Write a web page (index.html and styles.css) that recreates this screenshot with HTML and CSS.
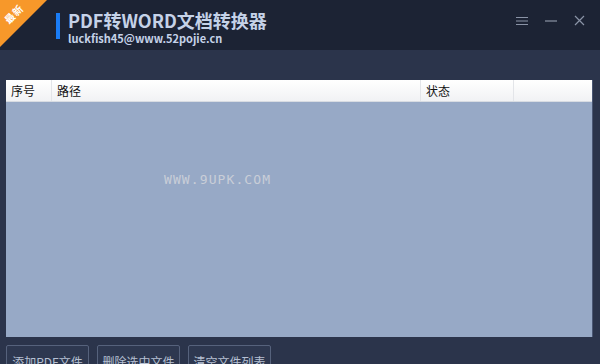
FILE: index.html
```html
<!DOCTYPE html>
<html lang="zh-CN">
  <head>
    <meta charset="UTF-8" />
    <title>PDF转WORD文档转换器</title>
    <link rel="stylesheet" href="styles.css">
  </head>
  <body>
    <div class="window">
      <div class="titlebar">
        <div class="badge"></div>
        <span class="badge-text">最新</span>
        <div class="brand">
          <div class="brand-bar"></div>
          <div class="brand-text">
            <h1>PDF转WORD文档转换器</h1>
            <p>luckfish45@www.52pojie.cn</p>
          </div>
        </div>
        <div class="controls">
          <svg width="12" height="10" viewBox="0 0 12 10"><path d="M0 1.5h12M0 5h12M0 8.5h12" stroke="#8a93a6" stroke-width="1.2"/></svg>
          <svg width="12" height="10" viewBox="0 0 12 10"><path d="M0 5h12" stroke="#8a93a6" stroke-width="1.2"/></svg>
          <svg width="11" height="11" viewBox="0 0 11 11"><path d="M1 1l9 9M10 1l-9 9" stroke="#8a93a6" stroke-width="1.2"/></svg>
        </div>
      </div>

      <div class="content">
        <div class="file-table">
          <div class="thead">
            <div class="col col-num">序号</div>
            <div class="col col-path">路径</div>
            <div class="col col-state">状态</div>
            <div class="col col-rest"></div>
          </div>
          <div class="tbody">
            <span class="watermark">WWW.9UPK.COM</span>
          </div>
        </div>

        <div class="actions">
          <button>添加PDF文件</button>
          <button>删除选中文件</button>
          <button>清空文件列表</button>
        </div>
      </div>
    </div>
  </body>
</html>
```

FILE: styles.css
```css
body {
  margin: 0;
  padding: 0;
  font-family: "Noto Sans CJK SC", "Noto Sans", sans-serif;
  background-color: #2b344b;
  overflow: hidden;
}

.window {
  width: 600px;
  height: 364px;
  display: flex;
  flex-direction: column;
  overflow: hidden;
}

/* Title bar */
.titlebar {
  height: 50px;
  flex-shrink: 0;
  background-color: #1c2334;
  display: flex;
  align-items: flex-start;
  position: relative;
  overflow: hidden;
}

.badge {
  position: absolute;
  left: 0;
  top: 0;
  width: 47px;
  height: 47px;
  background-color: #f7982a;
  clip-path: polygon(0 0, 100% 0, 0 100%);
}

.badge-text {
  position: absolute;
  left: 3px;
  top: 8px;
  color: #fff;
  font-size: 10px;
  font-weight: bold;
  line-height: 12px;
  letter-spacing: 1px;
  transform: rotate(-45deg);
}

.brand {
  display: flex;
  margin-left: 56px;
  margin-top: 13px;
}

.brand-bar {
  width: 4px;
  height: 26px;
  background-color: #1a7cf5;
  margin-right: 8px;
}

.brand-text h1 {
  margin: 0;
  margin-top: -3px;
  font-size: 18px;
  line-height: 21px;
  font-weight: bold;
  color: #c5d2e8;
}

.brand-text p {
  margin: 0;
  font-size: 11px;
  line-height: 14px;
  font-weight: bold;
  color: #c5d2e8;
}

.controls {
  margin-left: auto;
  margin-right: 15px;
  margin-top: 15px;
  display: flex;
  align-items: center;
  gap: 17px;
}

/* Content */
.content {
  flex: 1;
  padding: 30px 7px 0 6px;
  display: flex;
  flex-direction: column;
}

.file-table {
  height: 257px;
  flex-shrink: 0;
  display: flex;
  flex-direction: column;
  border-right: 1px solid #4a5774;
}

.thead {
  height: 21px;
  display: flex;
  background: linear-gradient(#ffffff, #f1f2f4);
  border-bottom: 1px solid #d8dce2;
  font-size: 12px;
  color: #111;
}

.col {
  padding-left: 5px;
  line-height: 21px;
  border-right: 1px solid #e3e5e9;
}

.col-num {
  width: 40px;
}

.col-path {
  width: 363px;
}

.col-state {
  width: 87px;
}

.col-rest {
  flex: 1;
  border-right: none;
}

.tbody {
  flex: 1;
  background-color: #97a9c6;
  position: relative;
}

.watermark {
  position: absolute;
  left: 158px;
  top: 70px;
  font-family: "DejaVu Sans Mono", monospace;
  font-size: 13px;
  color: #c9ced8;
  letter-spacing: 1.1px;
}

.actions {
  display: flex;
  gap: 8px;
  margin-top: 8px;
  flex-shrink: 0;
}

.actions button {
  width: 83px;
  height: 30px;
  flex-shrink: 0;
  background-color: #2e3850;
  border: 1px solid #56627c;
  border-radius: 2px;
  color: #b6c0d3;
  font-family: "Noto Sans CJK SC", sans-serif;
  font-size: 12px;
  padding: 0;
  padding-top: 2px;
}
```
